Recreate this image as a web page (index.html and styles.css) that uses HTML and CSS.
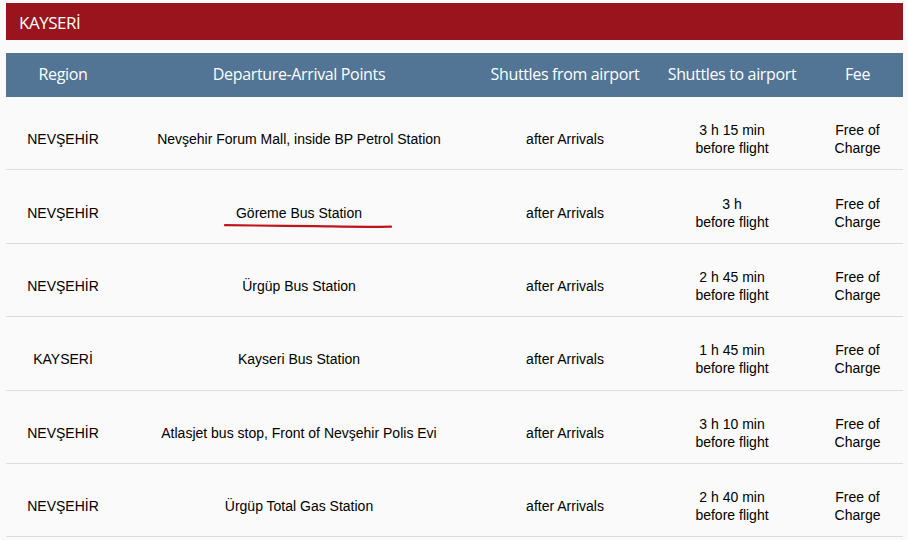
FILE: index.html
```html
<!DOCTYPE html>
<html lang="en">
<head>
<meta charset="utf-8">
<title>Kayseri Shuttles</title>
<link rel="stylesheet" href="styles.css">
</head>
<body>
<div class="page">
  <h2 class="title">KAYSERİ</h2>
  <table class="shuttles">
    <colgroup>
      <col class="c-region"><col class="c-points"><col class="c-from"><col class="c-to"><col class="c-fee">
    </colgroup>
    <thead>
      <tr>
        <th>Region</th>
        <th>Departure-Arrival Points</th>
        <th>Shuttles from airport</th>
        <th>Shuttles to airport</th>
        <th>Fee</th>
      </tr>
    </thead>
    <tbody>
      <tr>
        <td>NEVŞEHİR</td>
        <td>Nevşehir Forum Mall, inside BP Petrol Station</td>
        <td>after Arrivals</td>
        <td>3 h 15 min<br>before flight</td>
        <td>Free of<br>Charge</td>
      </tr>
      <tr>
        <td>NEVŞEHİR</td>
        <td><span class="marked">Göreme Bus Station<svg class="scribble" width="168" height="6" viewBox="0 0 168 6"><path d="M1 2.2 C40 2.4 60 2.8 90 3.2 S140 4.2 167 3.6" fill="none" stroke="#c0141c" stroke-width="2.2" stroke-linecap="round"/></svg></span></td>
        <td>after Arrivals</td>
        <td>3 h<br>before flight</td>
        <td>Free of<br>Charge</td>
      </tr>
      <tr>
        <td>NEVŞEHİR</td>
        <td>Ürgüp Bus Station</td>
        <td>after Arrivals</td>
        <td>2 h 45 min<br>before flight</td>
        <td>Free of<br>Charge</td>
      </tr>
      <tr>
        <td>KAYSERİ</td>
        <td>Kayseri Bus Station</td>
        <td>after Arrivals</td>
        <td>1 h 45 min<br>before flight</td>
        <td>Free of<br>Charge</td>
      </tr>
      <tr>
        <td>NEVŞEHİR</td>
        <td>Atlasjet bus stop, Front of Nevşehir Polis Evi</td>
        <td>after Arrivals</td>
        <td>3 h 10 min<br>before flight</td>
        <td>Free of<br>Charge</td>
      </tr>
      <tr>
        <td>NEVŞEHİR</td>
        <td>Ürgüp Total Gas Station</td>
        <td>after Arrivals</td>
        <td>2 h 40 min<br>before flight</td>
        <td>Free of<br>Charge</td>
      </tr>
    </tbody>
  </table>
</div>
</body>
</html>
```

FILE: styles.css
```css
html, body {
  margin: 0;
  padding: 0;
  background: #fafafa;
}
.page {
  padding: 3px 5px 0 6px;
}
.title {
  margin: 0;
  height: 37px;
  box-sizing: border-box;
  padding-top: 1px;
  line-height: 37px;
  background: #99141c;
  color: #fff;
  font-family: "Open Sans", "Noto Sans", sans-serif;
  font-size: 17px;
  font-weight: 400;
  padding-left: 13px;
  letter-spacing: -0.5px;
}
.shuttles {
  margin-top: 13px;
  width: 897px;
  border-collapse: collapse;
  table-layout: fixed;
  font-family: "Liberation Sans", Arial, sans-serif;
  font-size: 14px;
  color: #000;
}
.c-region { width: 114px; }
.c-points { width: 358px; }
.c-from { width: 174px; }
.c-to { width: 160px; }
.c-fee { width: 91px; }
.shuttles thead th {
  background: #527596;
  color: #fff;
  font-family: "Open Sans", "Noto Sans", sans-serif;
  font-weight: 400;
  font-size: 16px;
  letter-spacing: -0.35px;
  height: 44px;
  box-sizing: border-box;
  padding: 0 0 2px;
  text-align: center;
  vertical-align: middle;
}
.shuttles tbody td {
  height: 60.4px;
  padding: 12px 0 0;
  text-align: center;
  vertical-align: middle;
  line-height: 18px;
  border-bottom: 1px solid #dcdcdc;
}
.marked {
  position: relative;
  display: inline-block;
}
.scribble {
  position: absolute;
  left: -12px;
  top: 19px;
}
```
